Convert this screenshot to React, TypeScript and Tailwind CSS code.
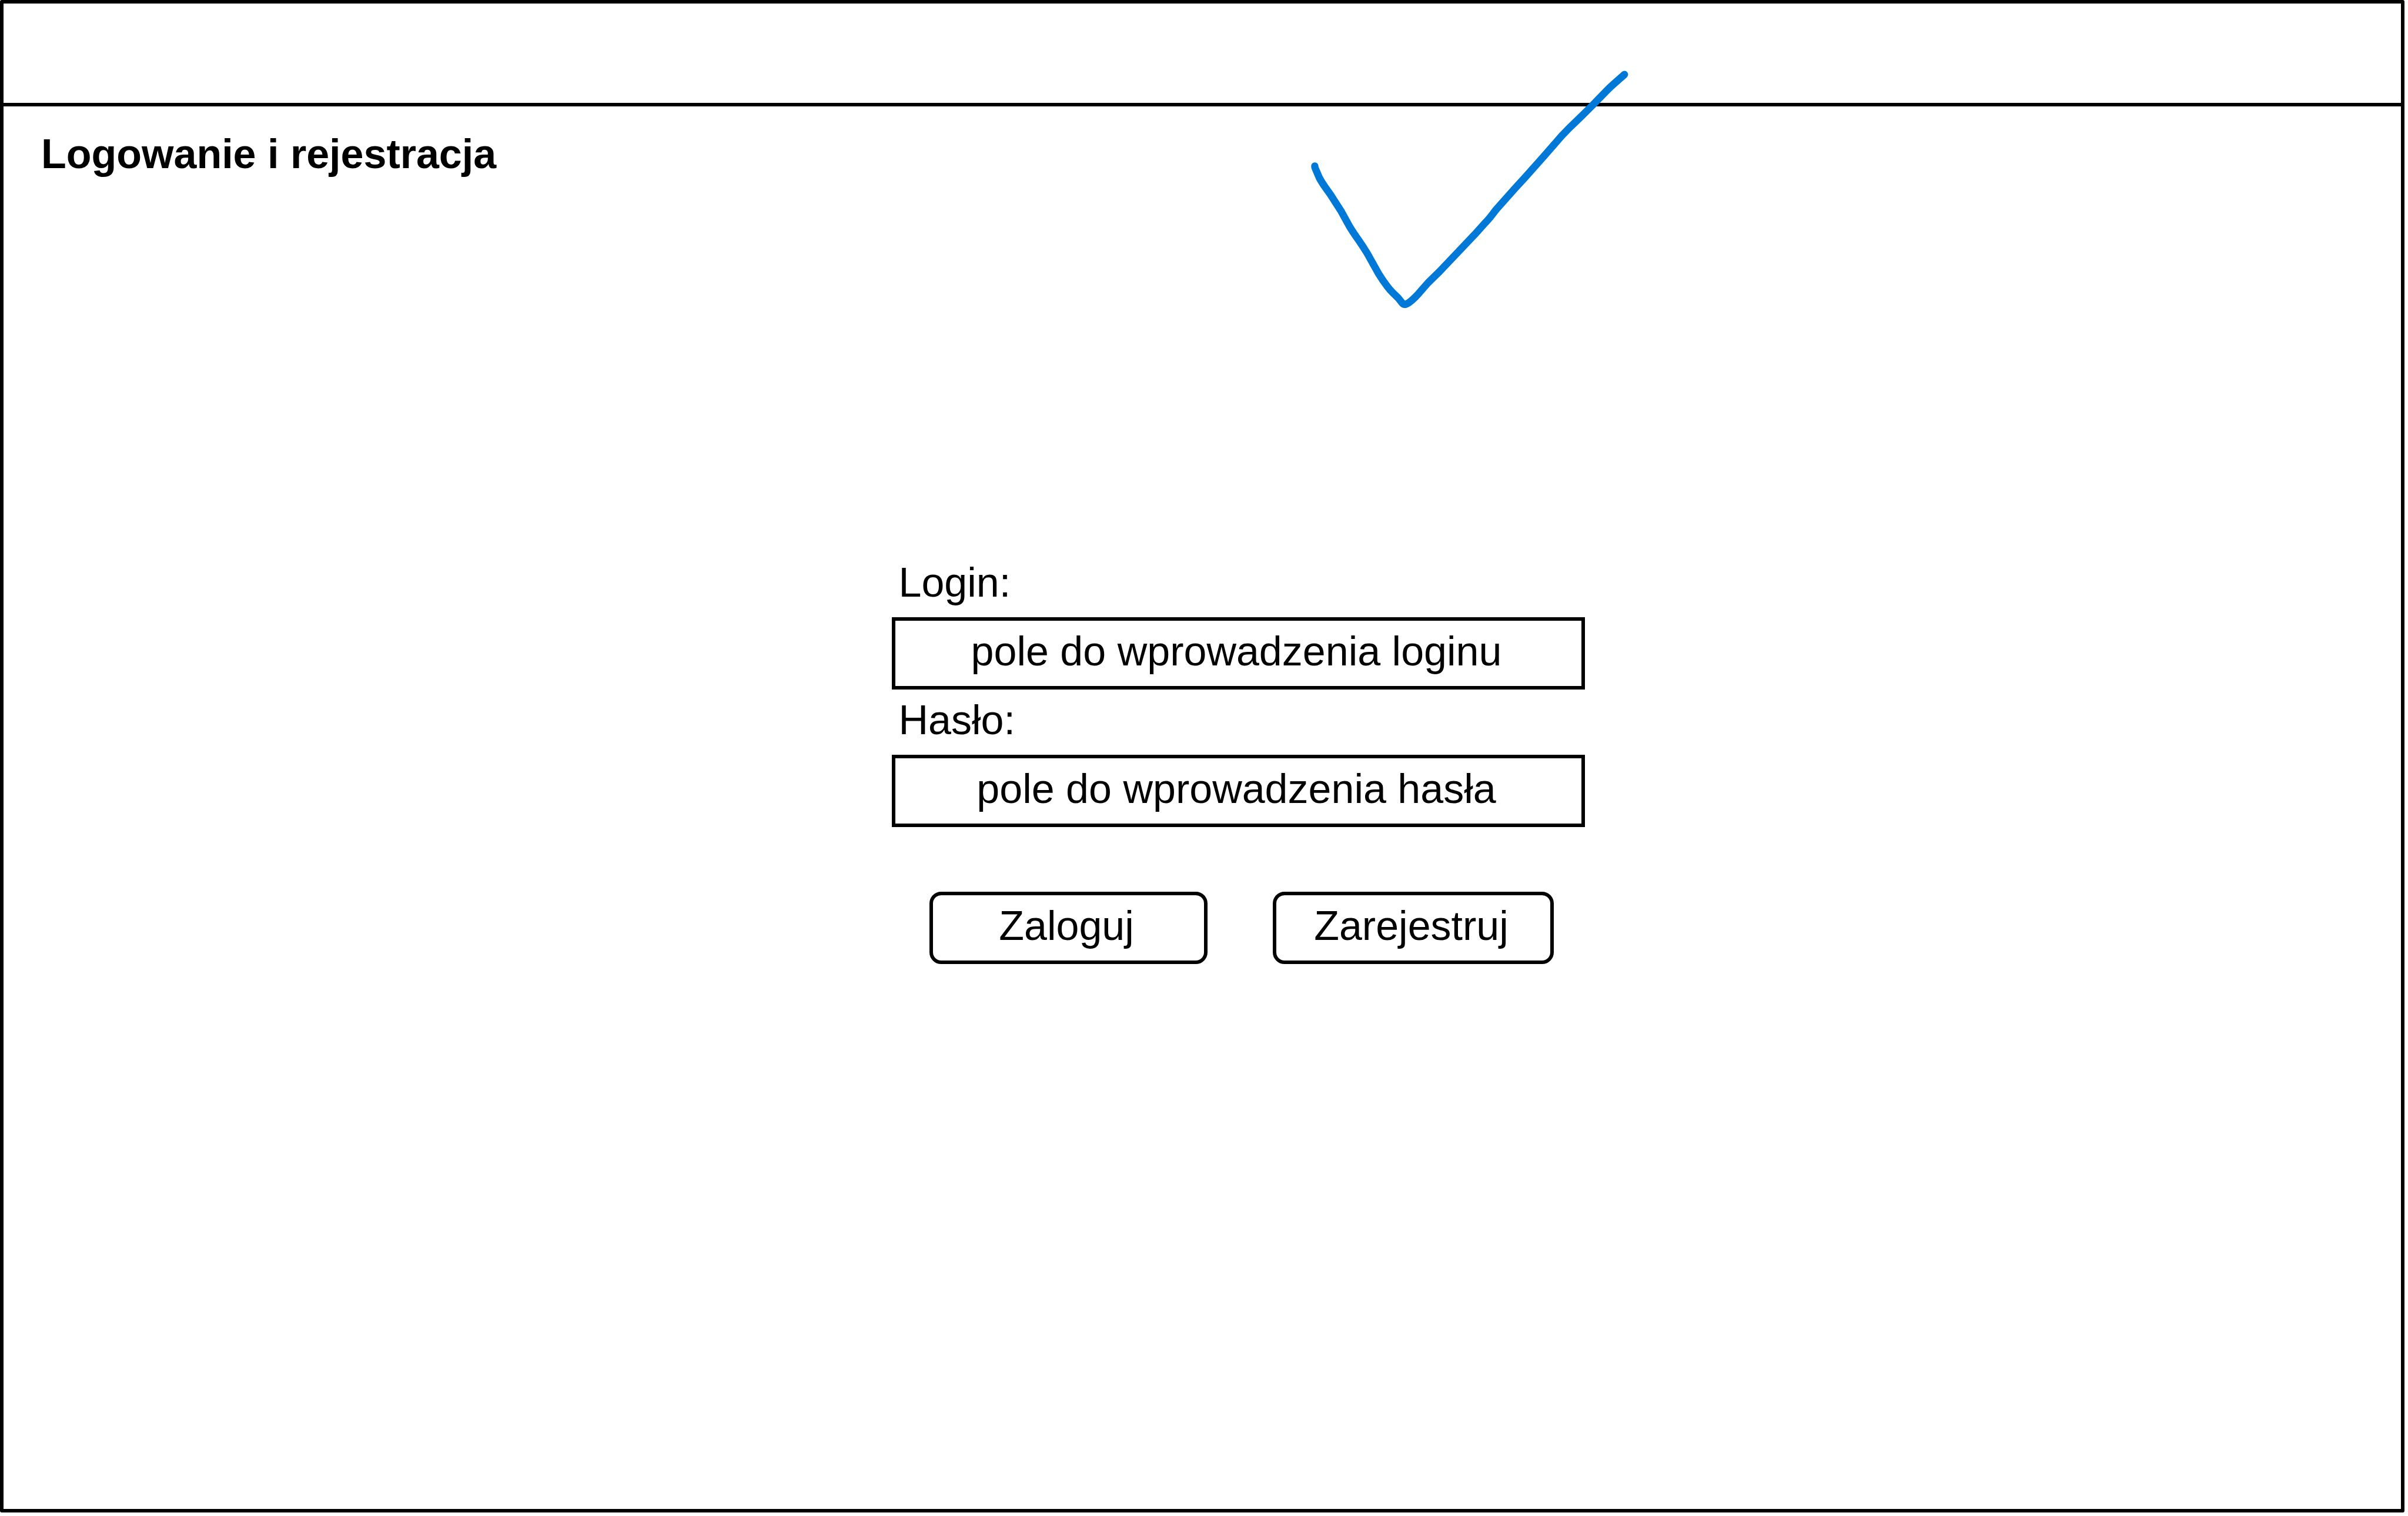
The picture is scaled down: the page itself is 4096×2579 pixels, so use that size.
import type { InputHTMLAttributes, ReactNode } from "react";

type FieldProps = InputHTMLAttributes<HTMLInputElement> & {
  id: string;
  label: string;
};

function Field({ id, label, ...rest }: FieldProps) {
  return (
    <div className="flex flex-col">
      <label htmlFor={id} className="flex h-[111px] items-center pb-2 pl-3">
        {label}
      </label>
      <input
        id={id}
        className="h-[123px] w-full border-6 border-black bg-white pr-1.5 pb-2 text-center outline-none placeholder:text-black placeholder:opacity-100"
        {...rest}
      />
    </div>
  );
}

function ActionButton({ className, children }: { className: string; children: ReactNode }) {
  return (
    <button
      type="button"
      className={`flex h-[123px] items-center justify-center rounded-[20px] border-6 border-black bg-white pr-1.5 pb-2 ${className}`}
    >
      {children}
    </button>
  );
}

/* Hand-drawn tick laid over the header and the page body. */
function PenTick() {
  return (
    <svg
      aria-hidden="true"
      viewBox="0 0 2280 1740"
      className="pointer-events-none absolute top-[109px] left-[2217px] w-[554px]"
      fill="none"
      stroke="#0078d7"
      strokeWidth="51"
      strokeLinecap="round"
      strokeLinejoin="round"
    >
      <path d="M80 714Q80 722 83 729L111 795Q128 828 157 868Q190 912 222 964L262 1026L325 1140Q352 1184 390 1237Q420 1280 450 1330L527 1468Q556 1515 590 1560Q608 1584 625 1600L665 1639L688 1668Q701 1685 716 1682Q738 1676 780 1635Q800 1616 822 1589L872 1532L953 1453L1198 1195L1270 1115Q1288 1097 1306 1075L1350 1018L1480 872L1555 790L1680 650L1760 558Q1805 503 1860 449L1950 362L2030 282L2120 190Q2145 164 2170 142L2248 73" />
    </svg>
  );
}

export default function App() {
  return (
    <div className="relative flex min-h-screen bg-white pr-1.5 pb-1.5 font-['Liberation_Sans',Arial,sans-serif] text-[70px] leading-[80px] text-black">
      <div className="flex flex-1 flex-col rounded-[3px] border-6 border-black">
        <header className="h-[175px] border-b-6 border-black" />
        <h1 className="pt-[41px] pl-16 font-bold">Logowanie i rejestracja</h1>
        <main className="flex flex-1 items-center justify-center pb-[290px] pl-[122px]">
          <form className="flex w-[1179px] flex-col">
            <Field
              id="login"
              label="Login:"
              type="text"
              autoComplete="username"
              placeholder="pole do wprowadzenia loginu"
            />
            <Field
              id="haslo"
              label="Hasło:"
              type="password"
              autoComplete="current-password"
              placeholder="pole do wprowadzenia hasła"
            />
            <div className="mt-[110px] flex gap-[111px] pl-16">
              <ActionButton className="w-[473px]">Zaloguj</ActionButton>
              <ActionButton className="w-[478px]">Zarejestruj</ActionButton>
            </div>
          </form>
        </main>
      </div>
      <PenTick />
    </div>
  );
}
